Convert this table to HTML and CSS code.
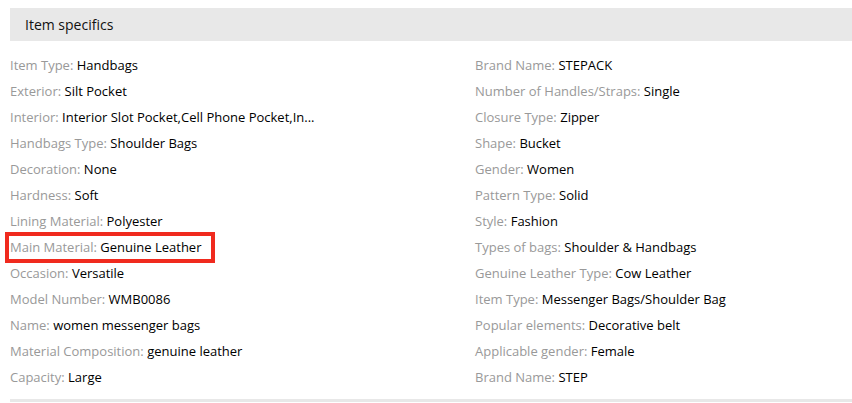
FILE: index.html
```html
<!DOCTYPE html>
<html>
<head>
<meta charset="utf-8">
<link rel="stylesheet" href="styles.css">
</head>
<body>
<div class="specs">
  <div class="specs-title">Item specifics</div>
  <ul class="specs-list">
    <li><span class="k">Item Type:</span> <span class="v">Handbags</span></li>
    <li><span class="k">Brand Name:</span> <span class="v">STEPACK</span></li>
    <li><span class="k">Exterior:</span> <span class="v">Silt Pocket</span></li>
    <li><span class="k">Number of Handles/Straps:</span> <span class="v">Single</span></li>
    <li><span class="k">Interior:</span> <span class="v">Interior Slot Pocket,Cell Phone Pocket,In...</span></li>
    <li><span class="k">Closure Type:</span> <span class="v">Zipper</span></li>
    <li><span class="k">Handbags Type:</span> <span class="v">Shoulder Bags</span></li>
    <li><span class="k">Shape:</span> <span class="v">Bucket</span></li>
    <li><span class="k">Decoration:</span> <span class="v">None</span></li>
    <li><span class="k">Gender:</span> <span class="v">Women</span></li>
    <li><span class="k">Hardness:</span> <span class="v">Soft</span></li>
    <li><span class="k">Pattern Type:</span> <span class="v">Solid</span></li>
    <li><span class="k">Lining Material:</span> <span class="v">Polyester</span></li>
    <li><span class="k">Style:</span> <span class="v">Fashion</span></li>
    <li><span class="mark"><span class="k">Main Material:</span> <span class="v">Genuine Leather</span></span></li>
    <li><span class="k">Types of bags:</span> <span class="v">Shoulder &amp; Handbags</span></li>
    <li><span class="k">Occasion:</span> <span class="v">Versatile</span></li>
    <li><span class="k">Genuine Leather Type:</span> <span class="v">Cow Leather</span></li>
    <li><span class="k">Model Number:</span> <span class="v">WMB0086</span></li>
    <li><span class="k">Item Type:</span> <span class="v">Messenger Bags/Shoulder Bag</span></li>
    <li><span class="k">Name:</span> <span class="v">women messenger bags</span></li>
    <li><span class="k">Popular elements:</span> <span class="v">Decorative belt</span></li>
    <li><span class="k">Material Composition:</span> <span class="v">genuine leather</span></li>
    <li><span class="k">Applicable gender:</span> <span class="v">Female</span></li>
    <li><span class="k">Capacity:</span> <span class="v">Large</span></li>
    <li><span class="k">Brand Name:</span> <span class="v">STEP</span></li>
  </ul>
</div>
</body>
</html>
```
FILE: styles.css
```css
html, body {
  margin: 0;
  padding: 0;
  background: #fff;
}
body {
  font-family: "Open Sans", "Liberation Sans", sans-serif;
  font-size: 13px;
  color: #000;
}
.specs {
  padding: 8px 0 0 10px;
}
.specs-title {
  height: 33px;
  line-height: 33px;
  background: #e8e8e8;
  padding-left: 15px;
  font-size: 14px;
  color: #111;
}
.specs-list {
  list-style: none;
  margin: 0;
  padding: 11px 0 9px 0;
  display: grid;
  grid-template-columns: 465px 1fr;
  border-bottom: 3px solid #e8e8e8;
}
.specs-list li {
  line-height: 26px;
  height: 26px;
  white-space: nowrap;
}
.k {
  color: #999;
}
.v {
  color: #000;
}
.mark {
  position: relative;
  display: inline-block;
  vertical-align: top;
}
.mark::after {
  content: "";
  position: absolute;
  left: -5px;
  right: -14px;
  top: -2px;
  bottom: -3px;
  border: 4px solid #f02a1e;
}
```
